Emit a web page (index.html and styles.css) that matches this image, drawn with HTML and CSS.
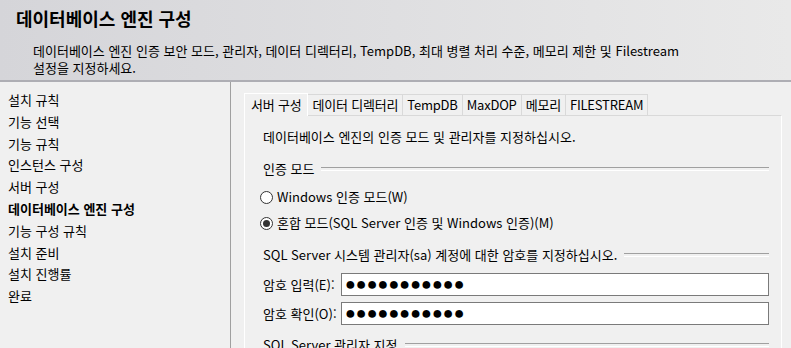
FILE: index.html
```html
<!DOCTYPE html>
<html lang="ko">
<head>
    <meta charset="UTF-8">
    <title>데이터베이스 엔진 구성</title>
    <link rel="stylesheet" href="styles.css">
</head>
<body>
    <header class="page-head">
        <h1>데이터베이스 엔진 구성</h1>
        <p>데이터베이스 엔진 인증 보안 모드, 관리자, 데이터 디렉터리, TempDB, 최대 병렬 처리 수준, 메모리 제한 및 Filestream<br>설정을 지정하세요.</p>
    </header>
    <div class="main">
        <ul class="steps">
            <li>설치 규칙</li>
            <li>기능 선택</li>
            <li>기능 규칙</li>
            <li>인스턴스 구성</li>
            <li>서버 구성</li>
            <li class="current">데이터베이스 엔진 구성</li>
            <li>기능 구성 규칙</li>
            <li>설치 준비</li>
            <li>설치 진행률</li>
            <li>완료</li>
        </ul>
        <div class="content">
            <div class="tabs">
                <span class="tab active">서버 구성</span>
                <span class="tab">데이터 디렉터리</span>
                <span class="tab">TempDB</span>
                <span class="tab">MaxDOP</span>
                <span class="tab">메모리</span>
                <span class="tab">FILESTREAM</span>
            </div>
            <div class="tab-panel">
                <p class="intro">데이터베이스 엔진의 인증 모드 및 관리자를 지정하십시오.</p>
                <div class="group-title">인증 모드</div>
                <label class="radio"><span class="circle"></span>Windows 인증 모드(W)</label>
                <label class="radio"><span class="circle checked"></span>혼합 모드(SQL Server 인증 및 Windows 인증)(M)</label>
                <div class="group-title">SQL Server 시스템 관리자(sa) 계정에 대한 암호를 지정하십시오.</div>
                <div class="field">
                    <span class="field-label">암호 입력(E):</span>
                    <div class="input">●●●●●●●●●●●</div>
                </div>
                <div class="field">
                    <span class="field-label">암호 확인(O):</span>
                    <div class="input">●●●●●●●●●●●</div>
                </div>
                <div class="group-title last">SQL Server 관리자 지정</div>
            </div>
        </div>
    </div>
</body>
</html>
```

FILE: styles.css
```css
* {
    box-sizing: border-box;
    margin: 0;
    padding: 0;
}
body {
    font-family: "Noto Sans CJK KR", "Noto Sans", sans-serif;
    font-size: 13px;
    color: #000;
    background: #f0f0f0;
    height: 348px;
    overflow: hidden;
}
.page-head {
    height: 82px;
    padding: 7px 16px 0 16px;
    background: linear-gradient(to right, #d5d5d9, #e9e9e9);
    border-bottom: 2px solid #aeaeb4;
}
.page-head h1 {
    font-size: 18px;
    font-weight: bold;
    line-height: 22px;
    margin-bottom: 13px;
}
.page-head p {
    padding-left: 17px;
    line-height: 17px;
}
.main {
    display: flex;
    height: 266px;
}
.steps {
    list-style: none;
    width: 231px;
    padding: 7px 0 0 8px;
    border-right: 1px solid #a0a0a0;
}
.steps li {
    line-height: 21.8px;
}
.steps .current {
    font-weight: bold;
}
.content {
    flex: 1;
    padding: 10px 9px 0 13px;
}
.tabs {
    display: flex;
    align-items: flex-end;
    height: 23px;
}
.tab {
    height: 21px;
    line-height: 19px;
    padding: 0 4px;
    letter-spacing: -0.2px;
    border: 1px solid #d9d9d9;
    border-bottom: none;
    border-left: none;
    background: #f0f0f0;
}
.tab.active {
    height: 23px;
    line-height: 21px;
    padding: 0 6px;
    border: 1px solid #ffffff;
    border-bottom: none;
    margin-bottom: -1px;
    position: relative;
    z-index: 1;
}
.tab-panel {
    height: 240px;
    border: 1px solid #d9d9d9;
    border-right-color: #ffffff;
    border-left-color: #ffffff;
    padding: 12px 12px 0 18px;
    background: #f0f0f0;
}
.intro {
    line-height: 18px;
    margin-bottom: 14px;
}
.group-title {
    display: flex;
    align-items: center;
    gap: 7px;
    line-height: 18px;
    margin-bottom: 10px;
}
.group-title::after {
    content: "";
    flex: 1;
    height: 2px;
    border-top: 1px solid #a0a0a0;
    border-bottom: 1px solid #ffffff;
}
.group-title.last {
    margin-top: 11px;
}
.radio {
    display: flex;
    align-items: center;
    gap: 4px;
    line-height: 18px;
    margin-left: -3px;
    margin-bottom: 8px;
}
.radio + .group-title {
    margin-top: 14px;
    margin-bottom: 9px;
}
.circle {
    width: 13px;
    height: 13px;
    border: 1px solid #333333;
    border-radius: 50%;
    background: #ffffff;
    display: flex;
    align-items: center;
    justify-content: center;
}
.circle.checked::before {
    content: "";
    width: 7px;
    height: 7px;
    border-radius: 50%;
    background: #333333;
}
.field {
    display: flex;
    align-items: center;
    margin-bottom: 6px;
}
.field-label {
    width: 78px;
}
.input {
    flex: 1;
    height: 23px;
    border: 1px solid #7a7a7a;
    background: #ffffff;
    padding-left: 3px;
    font-family: "Liberation Sans", sans-serif;
    font-size: 18px;
    line-height: 20px;
    overflow: hidden;
}
```
